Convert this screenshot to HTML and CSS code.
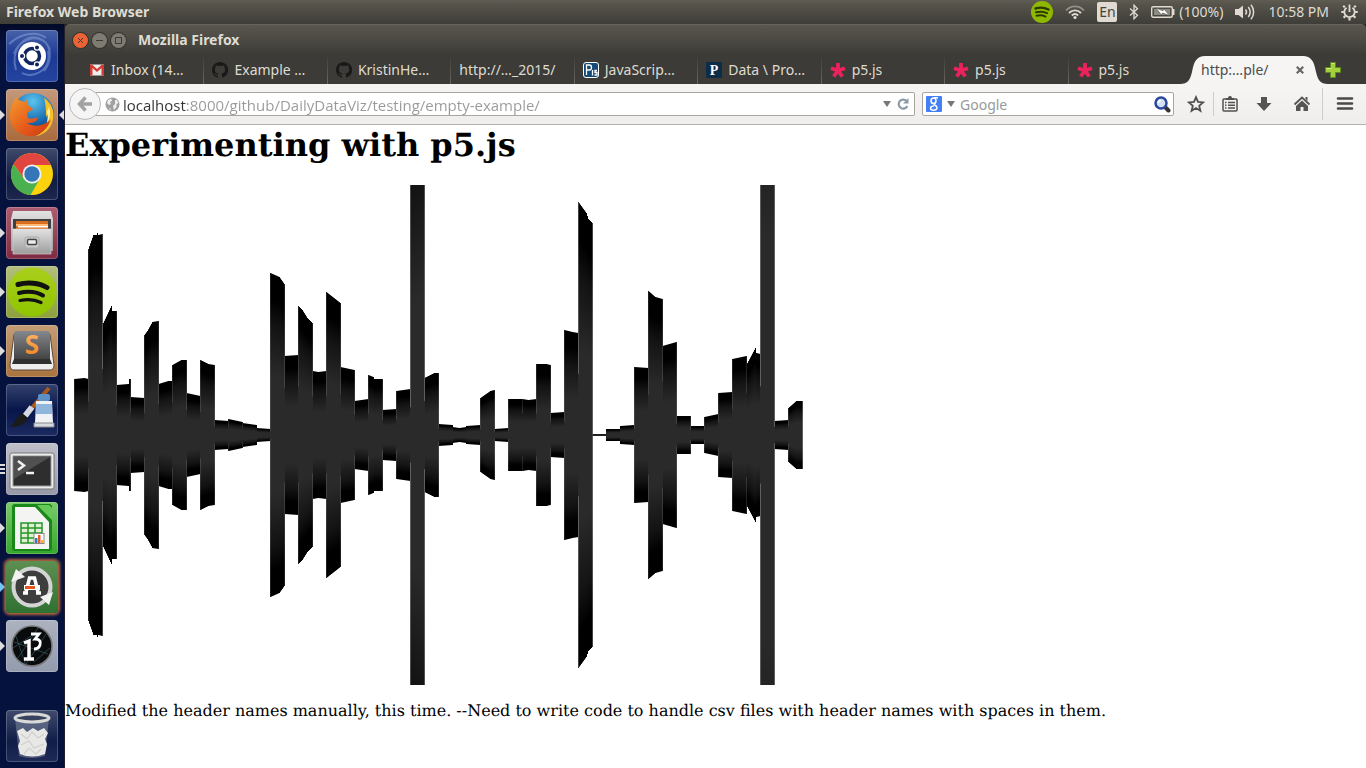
FILE: index.html
```html
<!DOCTYPE html>
<html lang="en">
<head>
<meta charset="utf-8">
<title>Mozilla Firefox</title>
<link rel="stylesheet" href="styles.css">
</head>
<body>
<svg class="defs" width="0" height="0" aria-hidden="true">
  <defs>
    <linearGradient id="steel" x1="0" y1="0" x2="0" y2="1"><stop offset="0" stop-color="#e2e2e2"/><stop offset="1" stop-color="#9c9c9c"/></linearGradient>
    <linearGradient id="ink" x1="0" y1="0" x2="0" y2="1"><stop offset="0" stop-color="#85888c"/><stop offset="1" stop-color="#3a3a3a"/></linearGradient>
    <linearGradient id="ember" x1="0" y1="0" x2="0" y2="1"><stop offset="0" stop-color="#ffc07a"/><stop offset="1" stop-color="#f47a10"/></linearGradient>
    <linearGradient id="fox" x1="0" y1="0" x2="1" y2="1"><stop offset="0" stop-color="#f59a2c"/><stop offset="0.6" stop-color="#e4571b"/><stop offset="1" stop-color="#c9390f"/></linearGradient>
    <radialGradient id="sea" cx="0.5" cy="0.2" r="0.8"><stop offset="0" stop-color="#5cc4ee"/><stop offset="0.6" stop-color="#1a6db0"/><stop offset="1" stop-color="#0b2f66"/></radialGradient>
    <linearGradient id="lime" x1="0" y1="0" x2="0" y2="1"><stop offset="0" stop-color="#a9cf1c"/><stop offset="1" stop-color="#8fc400"/></linearGradient>
    <symbol id="github" viewBox="0 0 16 16"><path fill="#191919" d="M8 0C3.58 0 0 3.58 0 8c0 3.54 2.29 6.53 5.47 7.59.4.07.55-.17.55-.38v-1.5c-2.2.5-2.7-1-2.7-1-.4-.9-.9-1.2-.9-1.2-.7-.5.1-.5.1-.5.8.1 1.200.8 1.200.8.7 1.300 1.900.9 2.300.7.1-.5.3-.9.500-1.100-1.800-.2-3.600-.9-3.600-4 0-.9.300-1.600.8-2.100-.1-.2-.4-1 .1-2.100 0 0 .7-.2 2.200.8a7.600 7.600 0 0 1 4 0c1.500-1 2.200-.8 2.200-.8.4 1.100.2 1.900.1 2.100.500.6.8 1.300.8 2.100 0 3.100-1.900 3.700-3.700 3.900.3.3.6.8.6 1.600v2.300c0 .2.100.500.600.4A8 8 0 0 0 8 0z"/></symbol>
    <symbol id="p5star" viewBox="0 0 16 16"><path stroke="#ed225d" stroke-width="3.800" d="M8 8.500V1M8 8.500l7-2.300M8 8.500l4.300 6M8 8.500l-4.300 6M8 8.500L1 6.200"/></symbol>
  </defs>
</svg>

<header class="panel">
  <span class="panel-title">Firefox Web Browser</span>
  <div class="indicators">
    <svg width="22" height="22" viewBox="0 0 22 22" role="img" aria-label="Spotify"><circle cx="11" cy="11" r="11" fill="#8fb900"/><path fill="none" stroke="#2b3a00" stroke-linecap="round" stroke-width="2.400" d="M4.500 7.500c4-1.300 9-1 13 1"/><path fill="none" stroke="#2b3a00" stroke-linecap="round" stroke-width="2" d="M5 11.300c4-1.100 8-.7 11 .9M5.500 14.800c3-.8 6.500-.5 9 .8"/></svg>
    <svg width="20" height="16" viewBox="0 0 20 16" role="img" aria-label="Wi-Fi"><g fill="none" stroke-width="1.800"><path stroke="#918f87" d="M1 6.500C6 1 14 1 19 6.500"/><path stroke="#dfdbd2" d="M4 9c3.500-3.600 8.500-3.600 12 0M6.800 11.500c2-2 4.400-2 6.400 0"/></g><circle cx="10" cy="13.500" r="1.600" fill="#dfdbd2"/></svg>
    <span class="keyboard">En</span>
    <svg width="10" height="16" viewBox="0 0 10 16" role="img" aria-label="Bluetooth"><path fill="none" stroke="#dfdbd2" stroke-width="1.300" d="M1 4.500l7.500 6.800L5 14.800V1.200l3.500 3.500L1 11.500"/></svg>
    <span class="battery">
      <svg width="24" height="14" viewBox="0 0 24 14" aria-hidden="true"><rect x=".7" y="1.700" width="20.600" height="10.600" rx="1.500" fill="none" stroke="#dfdbd2" stroke-width="1.400"/><rect x="3" y="4" width="16" height="6" fill="#8d8b84"/><path fill="#dfdbd2" d="M22 4h1.500v6H22z"/><path fill="#fff" stroke="#4a4944" stroke-width=".6" d="M5 3l7 2.800 1-1.800 5.500 6.500-7-2.500-1 2z"/></svg>
      <span>(100%)</span>
    </span>
    <svg width="21" height="18" viewBox="0 0 21 18" role="img" aria-label="Volume"><path fill="#dfdbd2" d="M0 6h3.500L8 2.500v13L3.500 12H0z"/><path fill="none" stroke="#dfdbd2" stroke-width="1.500" d="M10.500 6.500c1.200 1.500 1.200 3.500 0 5M13.300 4c2.300 3 2.300 7 0 10M16 1.800c3.500 4.300 3.500 10.100 0 14.400"/></svg>
    <time>10:58 PM</time>
    <svg width="17" height="18" viewBox="0 0 17 18" role="img" aria-label="Session"><g fill="none" stroke="#dfdbd2"><path stroke-width="1.800" d="M5.500 4.700a5.200 5.200 0 1 0 6 0M8.500 1.500v7.500"/><path stroke-width="2.200" d="M3.800 4.300L2.200 2.800M13.200 4.300l1.600-1.500M2.800 9H.3M14.200 9h2.500M4.300 13l-1.700 1.800M12.700 13l1.700 1.800M8.500 15v2.500"/></g></svg>
  </div>
</header>

<div class="desktop">
  <nav class="launcher" aria-label="Launcher">
    <button class="app dash" aria-label="Dash"><svg viewBox="0 0 52 52"><g fill="none" stroke="#8da8e0" stroke-width="2" opacity=".5"><path d="M10 40C4 20 18 4 32 8c14 4 15 22 6 33M8 24C14 6 38 2 44 20M16 43c10 6 30-2 26-22M3 14C14 4 30 0 40 8"/></g><circle cx="26" cy="26" r="14" fill="#fff"/><circle cx="26" cy="26" r="7.500" fill="none" stroke="#10245e" stroke-width="3.500"/><g fill="#10245e" stroke="#fff" stroke-width="1.200"><circle cx="16" cy="26" r="2.600"/><circle cx="31" cy="17.500" r="2.600"/><circle cx="31" cy="34.500" r="2.600"/></g></svg></button>
    <button class="app firefox running active" aria-label="Firefox"><svg viewBox="0 0 52 52"><circle cx="27" cy="25" r="21" fill="url(#sea)"/><path fill="#f6c02b" d="M38 9c8 5 11 14 9 22-2 9-9 15-17 16 9-5 14-12 12-22l-2 3c0-5 0-13-2-19z"/><path fill="#fff0a0" d="M43 18c2 6 1 12-3 18 2-5 2-9 1-13z"/><path fill="url(#fox)" d="M8 12l2-4c2 3 5 4 9 5l3-4 0 7 5 4c-2 3-6 2-6 5l1 4c4 2 7-1 10 0-2 5-7 5-11 5 6 4 17 4 24-4-3 10-11 17-20 17C12 47 4 38 4 27c0-6 1-10 4-15z"/></svg></button>
    <button class="app chrome" aria-label="Chrome"><svg viewBox="0 0 52 52"><circle cx="26" cy="26" r="21" fill="#fbd20c"/><path fill="#e04540" d="M26 26h0V17h18.900A21 21 0 0 0 7.500 16z"/><path fill="#4bb04f" d="M7.500 16A21 21 0 0 0 24.500 47L34 30.500l-8-4.500-8 4.500z"/><path fill="#e04540" d="M7.500 16l10.300 14L20 18z"/><circle cx="26" cy="26" r="9.500" fill="#f2f2f2"/><circle cx="26" cy="26" r="7.700" fill="#3476b8"/></svg></button>
    <button class="app files running" aria-label="Files"><svg viewBox="0 0 52 52"><path fill="url(#steel)" d="M7 4h38l2 8v32H5V12z"/><path fill="#404040" d="M7 12h38v12H7z"/><path fill="#d96f1e" d="M10 14h32v9H10z"/><path fill="#ffb978" d="M10 17h32v2H10z"/><path fill="#fff" d="M12 19h30v1.500H12z"/><path fill="url(#steel)" stroke="#d8d8d8" stroke-width=".6" d="M7 22h38v25H7z"/><rect x="19" y="30" width="14" height="11" rx="2" fill="#c9c9c9" stroke="#aaa"/><rect x="21.500" y="32.500" width="9" height="5" rx="1" fill="#eee" stroke="#444" stroke-width="1.500"/></svg></button>
    <button class="app spotify running" aria-label="Spotify"><svg viewBox="0 0 52 52"><circle cx="26" cy="26" r="24.500" fill="url(#lime)"/><g fill="none" stroke="#111" stroke-linecap="round"><path stroke-width="5" d="M12 18.500c9-2.500 21-2 29 3"/><path stroke-width="4" d="M13 27c8-2 17-1.500 24 2.500"/><path stroke-width="3.200" d="M14 34.500c7-1.500 15-1 21 2"/></g></svg></button>
    <button class="app sublime running" aria-label="Sublime Text"><svg viewBox="0 0 52 52"><path fill="#eee" stroke="#5b4a38" d="M8 9h36l4 31q0 5-4 5H8q-4 0-4-5z"/><rect x="8" y="6" width="36" height="32" rx="3" fill="url(#ink)"/><path fill="#303030" d="M8 34h36l2 5H6z"/><text x="26" y="29" text-anchor="middle" class="mark mark-sublime">S</text></svg></button>
    <button class="app paint" aria-label="Paint"><svg viewBox="0 0 52 52"><path stroke="#a9591c" stroke-width="4" d="M43 4L25 25"/><path stroke="#d5d9df" stroke-width="6" d="M26 23l-7 9"/><path fill="#1b1b1b" d="M16 29l6 5c-3 7-10 9-18 9 4-3 7-11 12-14z"/><rect x="32" y="10" width="12" height="7" rx="2" fill="#5c8fc5"/><path fill="#f0f1f4" d="M30 17h16l1 22H29z"/><path fill="#8fb5dd" d="M30 20h16v10H30z"/><path fill="#d5dae2" stroke="#888" d="M28 39h20v4H28z"/></svg></button>
    <button class="app terminal running many" aria-label="Terminal"><svg viewBox="0 0 52 52"><rect x="4" y="10" width="44" height="36" rx="2" fill="#ececec" stroke="#777"/><rect x="7" y="13" width="38" height="30" fill="#2e2e2e" stroke="#999"/><path fill="#505050" d="M8 14h36L8 36z"/><path fill="none" stroke="#f2f2f2" stroke-width="2.500" d="M12 18l6 4.500-6 4.500M20 30h8"/></svg></button>
    <button class="app calc running" aria-label="LibreOffice Calc"><svg viewBox="0 0 52 52"><rect x="6" y="2" width="40" height="47" rx="3" fill="#188819"/><path fill="#f4f5f3" d="M9 5h20l14 15v27H9z"/><path fill="#66c957" d="M31 3h12l3 3v12z"/><path fill="#dff0d5" stroke="#249526" stroke-width="1.500" d="M15 21h21v20H15zM15 26h21M15 31h21M15 36h21M22 21v20M29 21v20"/><rect x="28" y="31.500" width="10" height="10" fill="#fff" stroke="#888"/><path fill="#2d7dc3" d="M29 36h2.500v5H29z"/><path fill="#e65b28" d="M32 33h2.500v8H32z"/><path fill="#f5b32a" d="M35 38h2.500v3H35z"/></svg></button>
    <button class="app updater running urgent" aria-label="Software Updater"><svg viewBox="0 0 52 52"><circle cx="26" cy="26" r="17" fill="#3d3d3d"/><circle cx="26" cy="26" r="18.500" fill="none" stroke="#d4d4d4" stroke-width="4"/><path fill="#f2f2f2" d="M5 21l5-13 9 8zM47 31l-4 13-9-8z"/><path fill="none" stroke="#fff" stroke-width="3.500" d="M20 33v-2l3.500-14h5L32 31v2M17 32h5M30 32h5"/><path fill="#fff" d="M18 24h16v5H18z"/><path fill="#e5581c" d="M19 25h10v3H19z"/></svg></button>
    <button class="app processing running" aria-label="Processing"><svg viewBox="0 0 52 52"><circle cx="26" cy="26" r="20" fill="#090b0d" stroke="#777" stroke-width="1.500"/><path fill="none" stroke="#355a62" stroke-width=".7" d="M8 22l34 12M12 38l20-30M20 44L40 14M10 16l10 30M7 28l18-12M28 42l16-14"/><path fill="none" stroke="#fff" stroke-width="3.500" d="M18 23l5-2v18M18 39h10"/><path fill="none" stroke="#fff" stroke-width="2.800" d="M25 14h8l-4 5c5 0 6 3 5 6-1 3-3 4-6 4"/></svg></button>
    <button class="app trash" aria-label="Trash"><svg viewBox="0 0 52 52"><path fill="#77809a" fill-opacity=".6" d="M9 8h34l-4 38q-13 4-26 0z"/><path fill="#e8e8e6" d="M11 21l6-3 4 4 6-4 5 3 6-3 4 5-3 6 2 5-2 10q-13 5-25 0l-2-8 2-5z"/><path fill="none" stroke="#cfcfcb" stroke-width="1.200" d="M15 24l6 5 5-7 6 6 6-4M15 35l8-4 5 7 10-4M18 44l5-6 7 6 5-5"/><ellipse cx="26" cy="8" rx="17" ry="4" fill="#38425f" stroke="#d9dad8" stroke-width="3"/></svg></button>
  </nav>

  <main class="window">
    <div class="titlebar">
      <button class="control close" aria-label="Close"><svg viewBox="0 0 15 15"><path d="M5 5l5 5M10 5l-5 5"/></svg></button>
      <button class="control" aria-label="Minimize"><svg viewBox="0 0 15 15"><path d="M4 7.500h7"/></svg></button>
      <button class="control" aria-label="Maximize"><svg viewBox="0 0 15 15"><path d="M4.500 4.500h6v6h-6z"/></svg></button>
      <span class="window-title">Mozilla Firefox</span>
    </div>

    <div class="tabstrip">
      <div class="tabs" role="tablist">
        <button class="tab" role="tab"><svg viewBox="0 0 16 16"><path fill="#eee" d="M1 2.500h14v11H1z"/><path fill="#d33b30" d="M1 2.500h2L8 7l5-4.500h2v11h-2.500V6L8 10 3.500 6v7.500H1z"/></svg>Inbox (14…</button>
        <button class="tab" role="tab"><svg><use href="#github"/></svg>Example …</button>
        <button class="tab" role="tab"><svg><use href="#github"/></svg>KristinHe…</button>
        <button class="tab" role="tab">http://…_2015/</button>
        <button class="tab" role="tab"><svg viewBox="0 0 16 16"><rect x=".5" y=".5" width="15" height="15" rx="2.500" fill="#164a76" stroke="#fff"/><path fill="none" stroke="#fff" stroke-width="1.300" d="M3.500 13V3h3q2 0 2 2.500T6.500 8h-3M9.500 8v5.500M14 8.500h-2v2h2v2.500h-2.500"/></svg>JavaScrip…</button>
        <button class="tab" role="tab"><svg viewBox="0 0 16 16"><rect width="16" height="16" rx="1" fill="#0d2c48"/><text x="8" y="13" text-anchor="middle" class="mark mark-page">P</text></svg>Data \ Pro…</button>
        <button class="tab" role="tab"><svg><use href="#p5star"/></svg>p5.js</button>
        <button class="tab" role="tab"><svg><use href="#p5star"/></svg>p5.js</button>
        <button class="tab" role="tab"><svg><use href="#p5star"/></svg>p5.js</button>
      </div>
      <div class="tab-current" role="tab" aria-selected="true">
        <svg class="tab-shape" viewBox="0 0 148 28" preserveAspectRatio="none" aria-hidden="true"><path fill="#f6f5f4" d="M0 28c8 0 10-4 12-12C14 5 17 0 25 0h98c8 0 11 5 13 16 2 8 4 12 12 12z"/></svg>
        <span class="tab-label">http:…ple/</span>
        <button class="tab-close" aria-label="Close tab"><svg width="8" height="8" viewBox="0 0 8 8"><path stroke="#666" stroke-width="2.200" d="M.8.8l6.400 6.400M7.200.8L.8 7.200"/></svg></button>
      </div>
      <button class="new-tab" aria-label="New tab"><svg width="16" height="16" viewBox="0 0 16 16"><path fill="#a5cf3d" stroke="#5c8a1c" d="M5.500.5h5v5h5v5h-5v5h-5v-5h-5v-5h5z"/><path stroke="#d3ec8b" d="M6.500 1.500h3M1.500 6.500h5"/></svg></button>
    </div>

    <div class="toolbar">
      <button class="back" aria-label="Back"><svg width="16" height="16" viewBox="0 0 16 16"><path fill="none" stroke="#a3a3a3" stroke-width="3.400" d="M8.500 1.500L2.500 8l6 6.500M2.500 8H15"/></svg></button>
      <div class="field location">
        <svg width="15" height="15" viewBox="0 0 15 15" aria-hidden="true"><circle cx="7.500" cy="7.500" r="7" fill="#a0a0a0"/><path fill="#eee" d="M3 3l3-1.500 1 2-2 2 1 1.500-2 1-2-2zM10 3l2 0 1.500 3-2 1 0 3-2.500 3-1-4 2-2zM4 11l2 1-1 1.500z"/></svg>
        <input class="url" type="text" aria-label="Address" value="localhost:8000/github/DailyDataViz/testing/empty-example/">
        <svg width="8" height="6" viewBox="0 0 8 6" aria-hidden="true"><path fill="#777" d="M0 0h8L4 6z"/></svg>
        <button class="plain" aria-label="Reload"><svg width="12" height="12" viewBox="0 0 12 12"><path fill="none" stroke="#8c9ba8" stroke-width="2.200" d="M9.500 3A4.500 4.500 0 1 0 10.300 8"/><path fill="#8c9ba8" d="M11.500 0v5.500H6z"/></svg></button>
      </div>
      <div class="field search">
        <svg width="16" height="16" viewBox="0 0 16 16" aria-hidden="true"><rect width="16" height="16" rx="1" fill="#4480f5"/><g fill="none" stroke="#fff" stroke-width="1.500"><ellipse cx="7.500" cy="4.800" rx="2.500" ry="2.800"/><path d="M8 1.800h4M9.500 7c-2 1-2 1.500 0 2.500s2.500 4.500-1.800 4.700S3.500 10 8 10"/></g></svg>
        <svg width="8" height="6" viewBox="0 0 8 6" aria-hidden="true"><path fill="#777" d="M0 0h8L4 6z"/></svg>
        <input class="query" type="text" aria-label="Search" placeholder="Google">
        <button class="plain" aria-label="Go"><svg width="17" height="17" viewBox="0 0 17 17"><path stroke="#333" stroke-width="4" stroke-linecap="round" d="M11.500 11.500l3 3"/><circle cx="7" cy="7" r="5.500" fill="#cfe0f7" stroke="#2c469c" stroke-width="2.500"/><path fill="none" stroke="#fff" stroke-width="1.500" d="M4.500 7q0-2.500 2.500-2.500"/></svg></button>
      </div>
      <div class="tools">
        <button class="tool" aria-label="Bookmark this page"><svg viewBox="0 0 18 18"><path fill="none" stroke="#505050" stroke-width="1.800" d="M9 2.200l2 4.700 5.100.5-3.900 3.400 1.200 5L9 13.100l-4.400 2.700 1.200-5-3.900-3.400 5.100-.5z"/></svg></button>
        <button class="tool split" aria-label="Bookmarks"><svg viewBox="0 0 18 18"><path fill="none" stroke="#505050" stroke-width="1.500" d="M3 4h12q1 0 1 1v10q0 1-1 1H3q-1 0-1-1V5q0-1 1-1zM4 7.500h1.500M7 7.500h7M4 10.200h1.500M7 10.200h7M4 13h1.500M7 13h7"/><path fill="#505050" d="M5 5V3h2q0-2 2-2t2 2h2v2z"/></svg></button>
        <button class="tool" aria-label="Downloads"><svg viewBox="0 0 18 18"><path fill="#555" d="M6 2h6v6h4.500L9 16 1.500 8H6z"/></svg></button>
        <button class="tool" aria-label="Home"><svg viewBox="0 0 18 18"><path fill="none" stroke="#555" stroke-width="1.800" d="M1.500 9.500L9 2.500l7.500 7"/><path fill="#555" d="M9 5.500l6 5.500v5h-4.500v-4h-3v4H3v-5zM12.500 2h2v4l-2-2z"/></svg></button>
        <button class="tool menu" aria-label="Menu"><svg viewBox="0 0 18 18"><path stroke="#4a4a4a" stroke-width="2.600" stroke-linecap="round" d="M2 3.500h14M2 8.500h14M2 13.500h14"/></svg></button>
      </div>
    </div>

    <article class="page">
      <h1>Experimenting with p5.js</h1>
      <canvas id="wave" width="750" height="500" role="img" aria-label="Mirrored bar chart"></canvas>
      <p>Modified the header names manually, this time. --Need to write code to handle csv files with header names with spaces in them.</p>
    </article>
  </main>
</div>
<script src="wave.js"></script>
</body>
</html>
```

FILE: styles.css
```css
* { box-sizing: border-box; }

body {
  margin: 0;
  min-height: 100vh;
  display: flex;
  flex-direction: column;
  font: 14px/20px "Noto Sans", "Open Sans", sans-serif;
  color: #dfdbd2;
  background: #fff;
}

button {
  margin: 0;
  padding: 0;
  border: 0;
  background: none;
  font: inherit;
  color: inherit;
}

input { font: inherit; }
svg { display: block; flex: none; }
.defs { position: absolute; }

/* Top panel */
.panel {
  display: flex;
  align-items: center;
  justify-content: space-between;
  height: 24px;
  padding: 0 8px 0 6px;
  background: linear-gradient(#5f5d53, #55534a 20%, #3e3d38);
}
.panel-title { font-weight: 700; }
.indicators { display: flex; align-items: center; gap: 12px; }
.keyboard {
  width: 20px;
  border-radius: 2px;
  background: #dfdbd2;
  color: #45433e;
  text-align: center;
}
.battery { display: flex; align-items: center; gap: 4px; }

/* Launcher */
.desktop { display: flex; flex: 1; background: #2a2926; }
.launcher {
  display: flex;
  flex-direction: column;
  gap: 7px;
  width: 65px;
  padding: 6px;
  border-right: 1px solid #231f2a;
  background: linear-gradient(#020a28, #05123e 20px);
}
.app {
  position: relative;
  width: 52px;
  height: 52px;
  border-radius: 4px;
  box-shadow: inset 0 0 0 1px rgba(255, 255, 255, 0.2);
}
.app svg { width: 52px; height: 52px; }
.dash { background: linear-gradient(#4862a8, #1c3a94 50%, #2544a0); }
.firefox { background: linear-gradient(#c3997c, #a96a3c); }
.chrome { background: linear-gradient(#3f4a6c, #121c42 60%, #1d2850); }
.files { background: linear-gradient(#ad5d72, #7e2b42); }
.spotify { background: linear-gradient(#b3bf7c, #8da03c); }
.sublime { background: linear-gradient(#c39c75, #a9743e); }
.paint { background: linear-gradient(#34426e, #07154a 50%, #1b2a60); }
.terminal { background: linear-gradient(#bfbfca, #9798a6); }
.calc { background: linear-gradient(#7cca6c, #36a72c); }
.updater { background: linear-gradient(#5e8f52, #2f7131); }
.processing { background: linear-gradient(#adb2c0, #949bad); }
.trash { margin-top: auto; background: linear-gradient(#3f4a6c, #111d48 60%, #1f2b56); }
.urgent { box-shadow: 0 0 3px 2px #b9693e; }

.mark { font-weight: 700; }
.mark-sublime { font-family: "Open Sans", sans-serif; font-size: 26px; fill: url(#ember); }
.mark-page { font-family: "Liberation Serif", serif; font-size: 14px; fill: #fff; }

.running::before,
.active::after {
  content: "";
  position: absolute;
  top: 21px;
  left: -6px;
  width: 5px;
  height: 10px;
  background: #dcdcdc;
  clip-path: polygon(0 0, 100% 50%, 0 100%);
}
.active::after {
  left: 53px;
  clip-path: polygon(100% 0, 0 50%, 100% 100%);
}
.many::before {
  background: repeating-linear-gradient(#dcdcdc 0 2px, transparent 2px 4px);
  clip-path: none;
}
.urgent::before { background: #71c6f2; }

/* Window frame */
.window { display: flex; flex: 1; flex-direction: column; min-width: 0; }
.titlebar {
  display: flex;
  align-items: center;
  gap: 4px;
  height: 31px;
  padding: 0 8px;
  border-top: 1px solid #66645a;
  border-radius: 5px 5px 0 0;
  background: linear-gradient(#59574e, #3c3b37);
}
.control {
  width: 15px;
  height: 15px;
  border-radius: 50%;
  background: #7d7b72;
  box-shadow: 0 0 0 1px #35342f;
}
.control svg { fill: none; stroke: #3b3a35; stroke-width: 1; }
.close { background: #ee6335; }
.window-title { margin-left: 8px; font-weight: 700; }

/* Tabs */
.tabstrip {
  display: flex;
  height: 29px;
  padding-left: 16px;
  background: #3c3b37;
}
.tabs { display: flex; flex: 1; min-width: 0; }
.tab {
  display: flex;
  flex: 1 1 0;
  align-items: center;
  gap: 6px;
  min-width: 0;
  padding: 0 8px;
  border-right: 1px solid;
  border-image: linear-gradient(#3c3b37, #6b6962) 1;
  white-space: nowrap;
}
.tab:last-child { border-image: none; border-color: transparent; }
.tab svg { width: 16px; height: 16px; }
.tab-current {
  position: relative;
  display: flex;
  align-items: center;
  justify-content: space-between;
  width: 124px;
  padding: 0 12px 0 9px;
  color: #4c4c4c;
}
.tab-shape {
  position: absolute;
  inset: 1px -12px 0;
  width: 148px;
  height: 28px;
}
.tab-label, .tab-close { position: relative; }
.new-tab { display: flex; align-items: center; width: 50px; padding-left: 9px; }

/* Navigation toolbar */
.toolbar {
  display: flex;
  align-items: center;
  height: 41px;
  padding-left: 4px;
  border-bottom: 1px solid #b5b1ab;
  background: linear-gradient(#f6f5f4, #f0eeed);
}
.back {
  display: flex;
  align-items: center;
  justify-content: center;
  z-index: 1;
  width: 32px;
  height: 32px;
  margin-right: -8px;
  border: 1px solid #b4b9bf;
  border-radius: 50%;
  background: #f5f5f5;
}
.field {
  display: flex;
  align-items: center;
  height: 24px;
  border: 1px solid #aaa69f;
  border-radius: 2px;
  background: #fff;
}
.field input {
  flex: 1;
  min-width: 0;
  height: 22px;
  padding: 1px 0 0;
  border: 0;
  outline: 0;
}
.location { flex: 1; gap: 6px; padding: 0 5px 0 12px; border-left: 0; }
.location .url {
  margin-left: -3px;
  font-family: "Open Sans", "Noto Sans", sans-serif;
  font-size: 15px;
  background: linear-gradient(90deg, #333 64px, #999 64px);
  background-clip: text;
  color: transparent;
}
.search { width: 252px; gap: 5px; margin-left: 7px; padding: 0 2px 0 3px; }
.search .query { color: #333; background: none; }
.query::placeholder { color: #999; opacity: 1; }
.tools { display: flex; align-items: center; height: 32px; padding-left: 5px; }
.tool {
  display: flex;
  align-items: center;
  justify-content: center;
  width: 38px;
  height: 24px;
}
.tool svg { width: 18px; height: 18px; }
.tool:first-child { width: 34px; }
.split { width: 32px; border-left: 1px solid #cfcdca; }
.menu { height: 32px; width: 44px; margin-left: 1px; border-left: 1px solid #cfcdca; }

/* Document */
.page {
  flex: 1;
  color: #000;
  background: #fff;
  font: 16px/19px "DejaVu Serif", serif;
  text-rendering: geometricPrecision;
}
.page h1 { margin: 0 0 20px; font-size: 32px; line-height: 40px; }
.page canvas { display: block; }
.page p { margin: 16px 0; }
```

FILE: wave.js
```js
// Each entry is one bar: [offset, half height] pairs across its 14px width.
const bars = [
  [[0, 56], [10, 57], [14, 56]],
  [[0, 186], [5, 200], [8, 200], [9, 202], [10, 200], [14, 201]],
  [[0, 110], [8, 127], [9, 129], [10, 124], [14, 124]],
  [[0, 50], [12, 51], [13, 56], [14, 56]],
  [[0, 38], [14, 37]],
  [[0, 100], [3, 104], [8, 113], [14, 114]],
  [[0, 51], [10, 54], [14, 54]],
  [[0, 70], [9, 75], [14, 75]],
  [[0, 42], [14, 39]],
  [[0, 75], [8, 71], [14, 70]],
  [[0, 15], [14, 14]],
  [[0, 16], [14, 13]],
  [[0, 12], [14, 10]],
  [[0, 7], [14, 6]],
  [[0, 162], [9, 158], [14, 151]],
  [[0, 79], [14, 80]],
  [[0, 129], [4, 125], [9, 117], [14, 112]],
  [[0, 64], [6, 63], [14, 64]],
  [[0, 143], [14, 132]],
  [[0, 68], [14, 65]],
  [[0, 34], [14, 36]],
  [[0, 60], [5, 58], [6, 56], [14, 56]],
  [[0, 25], [14, 26]],
  [[0, 44], [14, 46]],
  [[0, 355], [14, 390]],
  [[0, 57], [10, 62], [14, 62]],
  [[0, 11], [14, 10]],
  [[0, 8], [7, 7], [14, 8]],
  [[0, 9], [14, 10]],
  [[0, 37], [10, 44], [14, 45]],
  [[0, 6], [14, 7]],
  [[0, 36], [14, 36]],
  [[0, 36], [6, 35], [14, 36]],
  [[0, 71], [10, 71], [14, 70]],
  [[0, 22], [14, 23]],
  [[0, 105], [8, 103], [14, 102]],
  [[0, 233], [8, 222], [10, 216], [14, 212]],
  [[0, 1], [14, 1]],
  [[0, 6], [14, 6]],
  [[0, 9], [14, 10]],
  [[0, 68], [14, 67]],
  [[0, 144], [7, 138], [14, 136]],
  [[0, 89], [14, 93]],
  [[0, 19], [14, 19]],
  [[0, 9], [14, 9]],
  [[0, 18], [14, 21]],
  [[0, 42], [14, 43]],
  [[0, 76], [14, 79]],
  [[0, 70], [9, 87], [10, 82], [14, 81]],
  [[0, 560], [14, 560]],
  [[0, 14], [14, 15]],
  [[0, 27], [8, 34], [14, 34]]
];

const ctx = document.getElementById("wave").getContext("2d");
const left = 9;
const step = 14;
const middle = 250;

function heightAt(points, x) {
  for (let i = 1; i < points.length; i++) {
    const [x0, h0] = points[i - 1];
    const [x1, h1] = points[i];
    if (x <= x1) return h0 + (h1 - h0) * (x - x0) / (x1 - x0);
  }
  return points[points.length - 1][1];
}

function column(x, h) {
  const fade = ctx.createLinearGradient(0, middle - h, 0, middle + h);
  fade.addColorStop(0, "#000");
  fade.addColorStop(0.08, "#000");
  fade.addColorStop(0.16, "#131313");
  fade.addColorStop(0.32, "#2a2a2a");
  fade.addColorStop(0.68, "#2a2a2a");
  fade.addColorStop(0.84, "#131313");
  fade.addColorStop(0.92, "#000");
  fade.addColorStop(1, "#000");
  ctx.fillStyle = fade;
  ctx.fillRect(x, middle - h, 1, h * 2);
}

bars.forEach((points, i) => {
  for (let x = 0; x < step; x++) column(left + i * step + x, heightAt(points, x));
});

// Pale edges where a bar rises above its neighbour.
const edgeHeight = (i, x) => bars[i] ? heightAt(bars[i], x) : 0;
for (let i = 0; i <= bars.length; i++) {
  const before = edgeHeight(i - 1, step);
  const after = edgeHeight(i, 0);
  const x = left + i * step;
  if (before > after) column(x, before);
  const tall = Math.max(before, after);
  const low = Math.min(before, after) * 0.6;
  if (tall > 12) {
    const strength = tall >= 200 || i === bars.length ? 0.25 : 0.12;
    ctx.fillStyle = `rgba(255,255,255,${strength})`;
    ctx.fillRect(x, middle - tall, 1, tall - low);
    ctx.fillRect(x, middle + low, 1, tall - low);
  }
}
```
